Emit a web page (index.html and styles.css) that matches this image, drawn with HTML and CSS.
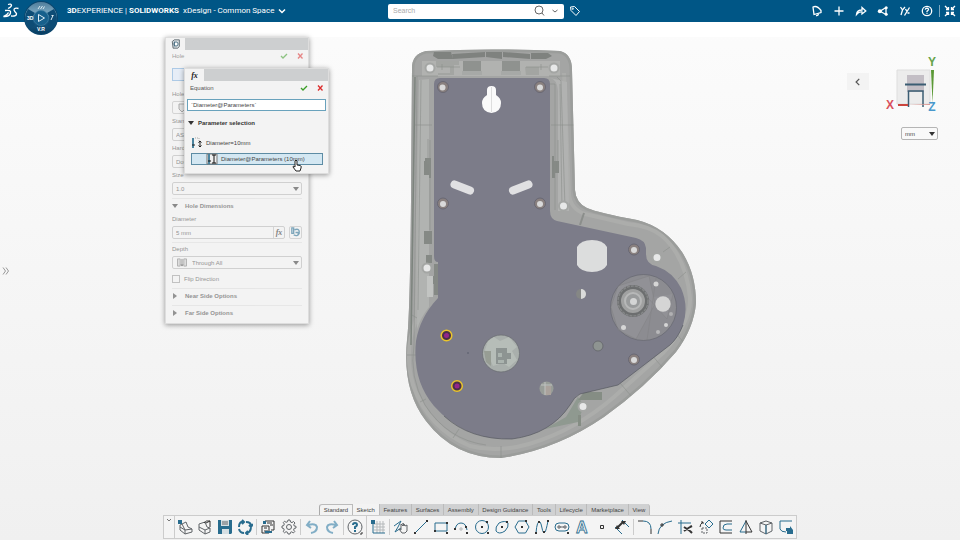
FILE: index.html
```html
<!DOCTYPE html>
<html lang="en">
<head>
  <meta charset="UTF-8" />
  <meta name="viewport" content="width=device-width, initial-scale=1.0" />
  <title>xDesign - Common Space</title>
  <link rel="stylesheet" href="styles.css">
</head>
<body>
  <header class="topbar">
    <svg class="ds-logo" viewBox="0 0 18 18" aria-label="3DS">
      <path d="M6 2.500Q9 1.500 9.500 3.200Q9.500 5 6 6.500M3 8.500Q9.500 7.500 8.500 11Q7.500 15 1.500 14.500Q5.500 13 6.500 10.500M16.500 6.500Q12 5.500 12 8Q12.500 9.500 14.500 11.500Q15 14.500 9 14" />
    </svg>
    <div class="brand"><b>3D</b>EXPERIENCE | <b>SOLIDWORKS</b></div>
    <button class="app-name">xDesign - Common Space
      <svg viewBox="0 0 8 8"><path d="M1 2.500L4 5.500L7 2.500" /></svg>
    </button>
    <div class="search">
      <input type="text" placeholder="Search" aria-label="Search">
      <svg class="glass" viewBox="0 0 12 12"><circle cx="6" cy="5" r="4" /><path d="M9 8L11 10.500" /></svg>
      <svg class="chev" viewBox="0 0 8 8"><path d="M1.500 3L4 5L6.500 3" /></svg>
    </div>
    <button class="tag" aria-label="Tags">
      <svg viewBox="0 0 12 12"><path d="M1.500 2L5.500 1.500L10.500 6.500L7 10.500L2 5.500Z" /><circle cx="3.800" cy="3.800" r=".6" /></svg>
    </button>
    <nav class="top-actions">
      <button aria-label="Notifications"><svg viewBox="0 0 12 12"><path d="M2 2Q6 0 10 5.500L10 7.500L3 9.500Z" /><path d="M5 10.500Q7 11 7.500 9" /></svg></button>
      <button aria-label="Add"><svg viewBox="0 0 12 12"><path d="M6 1.500V10.500M1.500 6H10.500" /></svg></button>
      <button aria-label="Share"><svg viewBox="0 0 12 12"><path d="M1.500 9.500Q2 5 7 5V2.500L10.800 6L7 9V7Q4 6.500 1.500 9.500Z" /></svg></button>
      <button aria-label="Collaborate"><svg viewBox="0 0 12 12"><path d="M9 2.500L3 6.200L9 9.500V3" /><g class="dots"><circle cx="9.200" cy="2.800" r="1.500" /><circle cx="2.800" cy="6.200" r="2" /><circle cx="9.200" cy="9.300" r="1.500" /></g></svg></button>
      <button aria-label="Tools"><svg viewBox="0 0 12 12"><path d="M1.500 2L3.500 5L6 2M3.500 5L2 10M6.500 4L8 6.500L10.500 2.500M8 6.500L5.500 10.500M8.500 8H10.500" /></svg></button>
      <button aria-label="Help"><svg viewBox="0 0 12 12"><circle cx="6" cy="6" r="4.700" /><path d="M4.300 4.700Q4.500 3.200 6 3.200Q7.600 3.300 7.500 4.700Q7.300 5.500 6 6.200V7.200M6 8.200V9" /></svg></button>
      <span class="bar"></span>
      <button aria-label="Exit full screen"><svg viewBox="0 0 12 12"><path d="M1 1L4.500 4.500M4.500 2V4.500H2M11 1L7.500 4.500M7.500 2V4.500H10M1 11L4.500 7.500M4.500 10V7.500H2M11 11L7.500 7.500M7.500 10V7.500H10" /></svg></button>
    </nav>
    <button class="compass" aria-label="Compass">
      <svg viewBox="0 0 36 36">
        <defs><linearGradient id="ball" x1="0" y1="0" x2="0" y2="1"><stop offset="0" stop-color="#507d9b" /><stop offset=".35" stop-color="#7ba9c2" /><stop offset=".5" stop-color="#1c628e" /><stop offset="1" stop-color="#073c60" /></linearGradient></defs>
        <circle cx="18" cy="18" r="17" fill="#0b466d" />
        <circle cx="18" cy="18" r="16" fill="url(#ball)" />
        <path d="M5 9L12 13Q7 18 12 25L6 29Q-1 18 5 9ZM31 9L24 13Q29 18 24 25L30 29Q37 18 31 9Z" fill="#0d4c75" />
        <circle cx="18" cy="18" r="7.500" fill="#17608c" stroke="#3d7da2" stroke-width=".7" />
        <path d="M15.500 14.500L21.500 18L15.500 21.500Z" fill="none" stroke="#dfedf5" />
        <path d="M15 9L17 6M17.500 9L19.500 6M20 9L21.500 6.500M28 20L30 15.500M28.500 15.500H30.500" stroke="#d8e8f0" fill="none" />
        <text x="4" y="20">3D</text><text x="14" y="31">V.R</text>
      </svg>
    </button>
  </header>

  <main class="workspace">
    <svg class="model" viewBox="400 40 300 425" aria-label="Housing part">
      <defs><clipPath id="shell"><path d="M412 68Q412 54 426 51Q492 48 560 51Q572 54 572 70L575 190Q576 203 587 208Q599 213 637 220Q665 227 682 252Q696 274 696 303Q694 328 676 352Q646 387 604 417Q556 450 501 458Q454 458 426 421Q402 390 407 340Q410 315 411 200Z" /></clipPath></defs>
      <g clip-path="url(#shell)">
        <rect x="400" y="40" width="300" height="425" fill="#a4a5a4" />
        <g fill="none" stroke="#9b9d9b" stroke-width="5">
          <path d="M412 68Q412 54 426 51Q492 48 560 51Q572 54 572 70L575 190Q576 203 587 208Q599 213 637 220Q665 227 682 252Q696 274 696 303Q694 328 676 352Q646 387 604 417Q556 450 501 458Q454 458 426 421Q402 390 407 340Q410 315 411 200Z" />
          <path d="M421 82L418 200L417 318Q403 350 413 385Q428 428 470 446Q497 453 529 444Q576 430 614 397L664 352Q691 322 690 298Q686 257 662 236Q650 226 628 224L585 214Q570 209 569 193L564 73" stroke="#acadab" stroke-width="4" />
        </g>
        <path d="M429 79V307Q421 317 417 329L419 80Z" fill="#b1b3b1" />
        <path d="M550 78Q557 79 558 91V211L569 211L567 82Z" fill="#b1b2b1" />
        <path d="M422 61H560V76H422Z" fill="#b1b2b0" />
        <g fill="#7f827f"><path d="M434 52H451L453 59H438L433 56ZM452 54L485 52V57L453 59ZM486 52H502V59L486 57ZM503 52L530 54V59L503 57ZM531 53H548L552 56L546 59H531Z" /></g>
        <g fill="#8f928f"><path d="M463 61H481V71H463ZM502 61H520V71H502Z" /><path d="M436 61H459V65H454V75H438V73H450V67H436ZM525 67H539V75H526Z" opacity=".4" /></g>
        <g fill="#a7a9a7"><path d="M462 71H482V75H462ZM501 71H521V75H501Z" /></g>
        <g fill="#858985"><path d="M425 158H431V178H429V175H424V161H425ZM552 156H554V161H559V173H555V178H552ZM424 231H432V244H424ZM426 255H432V263H426Z" /><path d="M434 264H439V295H434ZM427 276H438V284H427Z" /></g>
        <path d="M427 276H433V297H427Z" fill="#c2c4c2" />
        <g fill="none" stroke="#8b8e8b" stroke-width=".6">
          <path d="M412 76H438M549 76H570M417 76L414 345M421 80L418 310M414 125H432M551 125H574M549 84H555V210M560 84L562 210M557 77L561 81L565 208M412 315L417 318M407 355H416M420 402L426 399M453 438L459 429M501 446V458M580 385L592 400M620 383L632 397M651 354L662 367M675 332L684 343M678 279L686 272M663 252L670 247M414 345Q409 377 425 405Q448 440 486 445" />
          <path d="M428 139V164M430 140V230M558 140V170M437 67H460M526 67H548M442 64V70M541 64V70" />
          <path d="M580 225L584 213" stroke-width="2" />
          <path d="M415 77L411 345" stroke="#7d847e" stroke-width="1.500" />
        </g>
        <path d="M578 397L566 417L545 429L578 422L584 405Z" fill="#8f9990" />
        <path d="M584 392H602V400H578ZM578 415H581V426H578Z" fill="#858d84" />
      </g>
      <path class="plate" d="M434 84Q434 78 440 78H544Q550 78 550 84V211Q550 219 557 221L636 238Q645 240 646 248V254Q646 264 656 266Q673 272 681 288Q689 306 683 325Q678 338 670 345L618 385L580 394Q574 397 570 405Q551 434 512 439Q465 441 434 406Q412 380 416 341Q420 317 438 298V262Q434 262 434 256Z" />
      <path d="M683 325Q678 338 670 345L618 385L580 394Q574 397 570 405Q551 434 512 439Q470 440 444 416" fill="none" stroke="#4e5158" stroke-width=".6" />
      <path d="M487 96V90Q487 86 491.500 86Q496 86 496 90V95Q501 98 501 103Q501 112 491.500 113Q482 112 482 103Q482 98 487 95Z" fill="#fafafa" />
      <path d="M491.500 87V112" stroke="#ddd" />
      <g stroke="#e0e0e2" stroke-width="8" stroke-linecap="round"><path d="M454.500 184.500L470 190.500M528.500 184.500L513 190.500" /></g>
      <g fill="#89807f" stroke="#62626e" stroke-width=".8"><circle cx="443" cy="87" r="5.500" /><circle cx="540" cy="87" r="5.500" /><circle cx="443" cy="203.500" r="5.500" /><circle cx="540" cy="203.500" r="5.500" /><circle cx="634" cy="249.500" r="5.500" /><circle cx="634" cy="359.500" r="5.500" /></g>
      <g fill="#d9d9da"><circle cx="442.500" cy="87.500" r="3" /><circle cx="540" cy="87.500" r="3" /><circle cx="443" cy="204" r="3" /><circle cx="540" cy="204" r="3" /><circle cx="634" cy="250" r="3" /><circle cx="634" cy="360" r="3" /></g>
      <g fill="#e7e8e8" stroke="#a4a6a4" stroke-width="2"><circle cx="430" cy="68" r="4.500" /><circle cx="554" cy="68" r="4.500" /><circle cx="563.500" cy="206" r="4.500" /><circle cx="657" cy="257.500" r="4.500" /><circle cx="583" cy="406.500" r="4.500" /><circle cx="427" cy="268" r="4.500" /></g>
      <path d="M577 247Q581 240 592 240Q603 240 607 247V265Q603 272 592 272Q581 272 577 265Z" fill="#dcdddd" />
      <circle cx="643.500" cy="307.500" r="33" fill="#8c8c91" stroke="#656770" stroke-width=".7" />
      <path d="M618 286L611 307L618 330L636 339L655 304L649 276ZM656 278L647 340M648 298L667 319L673 294" fill="#9a9a9e" opacity=".4" stroke="#777" stroke-width=".6" />
      <circle cx="633" cy="301" r="14" fill="#a0a1a1" stroke="#6c6e6f" stroke-width="4" />
      <circle cx="633" cy="301" r="15" fill="none" stroke="#858788" stroke-width="1.500" stroke-dasharray="3 1" />
      <circle cx="633" cy="301" r="8" fill="#999b9c" stroke="#b7b8b8" stroke-width="2" />
      <circle cx="633.500" cy="301.500" r="3.500" fill="#d4d5d5" />
      <g fill="#d5d5d5"><circle cx="663" cy="304" r="7.700" /><circle cx="623.500" cy="327.500" r="2.500" /><circle cx="656" cy="284" r="2.500" /><circle cx="666" cy="325" r="2" /><circle cx="658" cy="332" r="2" opacity=".6" /><circle cx="671" cy="314" r="2" opacity=".5" /></g>
      <circle cx="581" cy="294" r="5" fill="#858785" /><path d="M581 289A5 5 0 0 1 581 299Z" fill="#dadbda" />
      <circle cx="598" cy="346" r="5" fill="#8e9491" stroke="#696b70" />
      <circle cx="501" cy="353.500" r="18.500" fill="#a9afac" stroke="#686c70" stroke-width=".7" />
      <path d="M485 350L488 341L494 337L500 341L509 337L517 347L512 351L517 360L509 367L503 363L493 366L490 359Z" fill="#c0c6bf" opacity=".6" />
      <path d="M496 348H507V353H511V359H507V364H496Z" fill="#8d9492" />
      <path d="M484 351H491V366L486 362Z" fill="#979d94" />
      <path d="M498 353H502V357H498ZM498 360H504V363H498Z" fill="#abb4af" />
      <circle cx="546.500" cy="388.500" r="7" fill="#989d98" /><path d="M545 386H551V395H545Z" fill="#aaa29c" /><path d="M541 385H552M545 382V395" stroke="#bfc2c0" />
      <g fill="#4a3047" stroke="#e9c52c" stroke-width="1.500"><circle cx="446.500" cy="335.500" r="5.300" /><circle cx="457" cy="386" r="5.300" /></g>
      <g fill="#93268a"><circle cx="446.500" cy="335.500" r="2.500" /><circle cx="457" cy="386" r="2.500" /></g>
      <circle cx="468" cy="353" r=".8" fill="#555966" />
    </svg>

    <button class="drawer" aria-label="Open tree"><svg viewBox="0 0 8 10"><path d="M1 1.500L3.500 5L1 8.500M4 1.500L6.500 5L4 8.500" /></svg></button>

    <aside class="view-tools">
      <button class="collapse" aria-label="Show tools"><svg viewBox="0 0 8 8"><path d="M5 1.500L2.500 4L5 6.500" /></svg></button>
      <div class="orient">
        <svg class="triad" viewBox="0 0 54 64">
          <path d="M13 20H46V54H13Z" fill="#ececec" stroke="#dedede" />
          <path d="M23 25H40V42H23Z" fill="#c3bec5" />
          <path d="M21 34.500H42" stroke="#3b5d73" stroke-width="2" />
          <path d="M24.500 57V41H39V57" fill="none" stroke="#3b5d73" stroke-width="1.500" />
          <path d="M14 54H24V56H14Z" fill="#cb453d" /><path d="M24 55L46 54V55Z" fill="#dc9692" />
          <path d="M47 20H50L48.500 53Z" fill="#5b9936" />
          <text x="6" y="59" fill="#d9505d">X</text><text x="48" y="16" fill="#66a34a">Y</text><text x="48" y="61" fill="#4898cc">Z</text>
        </svg>
        <div class="select-box units"><select aria-label="Units"><option>mm</option></select></div>
      </div>
    </aside>

    <section class="panel hole-panel">
      <div class="panel-tabs"><span class="panel-tab"><svg viewBox="0 0 12 12"><path d="M1.500 3L4 1H10V9L8 11H2.500Z" fill="#dce1e4" stroke="#4d5a61" /><circle cx="6" cy="6" r="2.500" fill="#fff" stroke="#396277" /><path d="M4 3V9" stroke="#396277" /></svg></span></div>
      <div class="panel-fade">
        <div class="panel-title"><span>Hole</span>
          <button class="ok" aria-label="Accept hole"><svg viewBox="0 0 8 8"><path d="M1 4L3 6L7 2" /></svg></button>
          <button class="cancel" aria-label="Cancel hole"><svg viewBox="0 0 8 8"><path d="M2 1.500L6.500 6.500M6.500 1.500L2 6.500" /></svg></button>
        </div>
        <div class="selection"></div>
        <label for="hole">Hole Type</label>
        <button class="hole-type" id="hole" aria-label="Hole Type"><svg viewBox="0 0 10 10"><path d="M2 1H8V6L5 9L2 6Z" fill="#ddd" stroke="#777" /></svg></button>
        <label for="standard">Standard</label>
        <div class="select-box"><select id="standard"><option>ASME</option></select></div>
        <label for="hardware">Hardware</label>
        <div class="select-box"><select id="hardware"><option>Dowel Hole</option></select></div>
        <label for="size">Size</label>
        <div class="select-box"><select id="size"><option>1.0</option></select></div>
        <h3 class="group">Hole Dimensions</h3>
        <label for="diameter">Diameter</label>
        <div class="dim-row">
          <div class="dim-input"><input id="diameter" type="text" value="5 mm"><button>fx</button></div>
          <button class="link" aria-label="Link dimension"><svg viewBox="0 0 12 12"><path d="M2 1H4V7H2ZM5 3Q11 1 10 7Q8 11 4 8.500M6 6H9V8" fill="none" stroke="#1f698f" stroke-width="1.500" /></svg></button>
        </div>
        <hr>
        <label for="depth">Depth</label>
        <div class="select-box with-icon">
          <svg viewBox="0 0 12 10"><path d="M1 1H4V9H1ZM8 1H11V9H8Z" fill="#ccc" stroke="#777" /><path d="M6 1V8M5 7L6 9L7 7" stroke="#333" fill="none" /></svg>
          <select id="depth"><option>Through All</option></select>
        </div>
        <label class="flip"><input type="checkbox"> Flip Direction</label>
        <h3 class="group closed">Near Side Options</h3>
        <h3 class="group closed">Far Side Options</h3>
      </div>
    </section>

    <section class="panel equation-panel">
      <div class="panel-tabs"><span class="panel-tab fx">fx</span></div>
      <div class="panel-title"><span>Equation</span>
        <button class="ok" aria-label="Accept equation"><svg viewBox="0 0 8 8"><path d="M1 4L3 6L7 2" /></svg></button>
        <button class="cancel" aria-label="Cancel equation"><svg viewBox="0 0 8 8"><path d="M2 1.500L6.500 6.500M6.500 1.500L2 6.500" /></svg></button>
      </div>
      <input class="formula" type="text" aria-label="Formula" value="`Diameter@Parameters`">
      <h3 class="group">Parameter selection</h3>
      <div class="param">
        <svg viewBox="0 0 12 12"><path d="M2 1V11" stroke="#4b849f" stroke-width="2" /><path d="M4 1H8V6" stroke="#aaa" stroke-dasharray="1 1" fill="none" /><path d="M1 8H4M9 4V10M7.500 5.500L9 4L10.500 5.500M7.500 8.500L9 10L10.500 8.500" stroke="#222" fill="none" /></svg>
        <span>Diameter=10mm</span>
      </div>
      <button class="param selected">
        <svg viewBox="0 0 12 12"><path d="M1 1H11V11H1Z" fill="#eee" stroke="#777" /><path d="M3 1V11" stroke="#4b849f" stroke-width="2" /><path d="M8 2V10M6 2H10M6 10H10M2 8H5" stroke="#111" fill="none" /></svg>
        <span>Diameter@Parameters (10mm)</span>
      </button>
      <svg class="pointer" viewBox="0 0 10 13"><path d="M3 8V2Q4 0 5 2V6L8 6.500Q10 7 9 9L8 12H4L1 8Q1 6 3 8Z" fill="#fff" stroke="#222" /></svg>
    </section>
  </main>

  <footer class="action-bar">
    <nav class="tabs">
      <button class="pinned">Standard</button>
      <button class="active">Sketch</button>
      <button>Features</button>
      <button>Surfaces</button>
      <button>Assembly</button>
      <button>Design Guidance</button>
      <button>Tools</button>
      <button>Lifecycle</button>
      <button>Marketplace</button>
      <button>View</button>
    </nav>
    <div class="tools">
      <button class="grip" aria-label="Collapse bar"><svg viewBox="0 0 8 8"><path d="M2 3L4 5L6 3" /></svg></button>
      <button aria-label="New part"><svg viewBox="0 0 16 16"><path class="g" d="M5 5L9 3L11 8L15 10V13L8 15L3 11V6Z" /><path class="g" d="M3 8L8 11L15 10M8 11V15M5 5L8 11" /><path class="bf" d="M1 1H5V5H1Z" /></svg></button>
      <button aria-label="Open"><svg viewBox="0 0 16 16"><path class="g" d="M2 5L8 3L10 8L13 9V13L8 15L2 11ZM2 8L8 11V15M8 11L13 9" /><path class="k" d="M7 4Q9 1 13 2V8M9 4L13 2" /></svg></button>
      <button aria-label="Save"><svg viewBox="0 0 16 16"><path class="bf" d="M1 1H15V14L14 15H1Z" /><path d="M4 1H12V7H4ZM5 10H12V15H5Z" fill="#d6dfe3" /><path class="g" d="M5 3H11M5 5H11" /></svg></button>
      <button aria-label="Update"><svg viewBox="0 0 16 16"><path class="b wide" d="M7 3Q2 2 2 8M2 10Q3 14 7 14M9 3Q14 3 14 7M14 9Q13 14 9 14M5 1L7 3L5 5M11 12L9 14L11 16M12 6L14 8L16 5" /></svg></button>
      <span class="sep"></span>
      <button aria-label="Design manager"><svg viewBox="0 0 16 16"><path class="k" d="M5 2H14V11H11M2 7H9V14H2ZM4 9H7M7 4H12M10 6H13M4 12H8" /><path class="bf" d="M3 2H6V5H3ZM5 12H12V14H5Z" /></svg></button>
      <button aria-label="Settings"><svg viewBox="0 0 16 16"><path class="g" d="M7 1H9L9.500 3L11 3.600L12.500 2.500L14 4L12.800 5.500L13.200 7L15 7.300V9L13.200 9.400L12.600 11L13.800 12.500L12.300 14L10.800 12.800L9.500 13.300L9 15H7L6.500 13.300L5 12.700L3.500 13.800L2.200 12.500L3.200 11L2.700 9.500L1 9V7L2.700 6.600L3.300 5L2.300 3.500L3.600 2.200L5 3.300L6.500 2.800Z" /><circle class="g" cx="8" cy="8" r="2.500" /></svg></button>
      <span class="sep"></span>
      <button aria-label="Undo"><svg viewBox="0 0 16 16"><path class="light wide" d="M7 14Q13 13 13 8Q12 4 4 6M6 2L3 6L7 9" /></svg></button>
      <button aria-label="Redo"><svg viewBox="0 0 16 16"><path class="light wide" d="M9 14Q3 13 3 8Q4 4 12 6M10 2L13 6L9 9" /></svg></button>
      <span class="sep"></span>
      <button aria-label="Help"><svg viewBox="0 0 16 16"><circle class="g" cx="8" cy="8" r="7" /><path class="b wide" d="M6 6Q6 4 8 4Q10 4 10 6Q10 7 8 8V10M8 11V13" /><path class="k" d="M13 15H15V13" /></svg></button>
      <span class="sep tall"></span>
      <button aria-label="Sketch"><svg viewBox="0 0 16 16"><path class="g faint" d="M4 5H15M4 8H15M4 11H15M7 2V14M10 2V14M13 2V14" /><path class="b" d="M3 3V14H15" /><path class="bf" d="M1 1H5V5H1Z" /></svg></button>
      <span class="sep"></span>
      <button aria-label="Sketch path"><svg viewBox="0 0 16 16"><path class="b" d="M1 7L8 2L5 8L2 13L8 9" /><path class="g" d="M8 11V5L10 7V4L11 7V5L12 7L14 6V12L12 14H9L6 10Z" /></svg></button>
      <button aria-label="Line"><svg viewBox="0 0 16 16"><path class="b" d="M2 14L14 2" /><path class="kf" d="M1 13H3V15H1ZM13 1H15V3H13Z" /></svg></button>
      <button aria-label="Rectangle"><svg viewBox="0 0 16 16"><path class="b" d="M2 4H14V12H2Z" /><path class="kf" d="M1 11H3V13H1ZM13 3H15V5H13ZM13 13H15V15H13Z" /></svg></button>
      <button aria-label="Arc"><svg viewBox="0 0 16 16"><path class="b" d="M2 11Q3 4 8 4Q13 4 14 11" /><path class="kf" d="M1 9H3V11H1ZM12 7H14V9H12ZM13 13H15V15H13Z" /><path class="g faint" d="M7 9H9V11H7Z" /></svg></button>
      <button aria-label="Circle"><svg viewBox="0 0 16 16"><circle class="b" cx="8" cy="8" r="6.500" /><path class="kf" d="M7 7H9V9H7ZM12 2H14V4H12ZM13 13H15V15H13Z" /></svg></button>
      <button aria-label="Ellipse"><svg viewBox="0 0 16 16"><path class="b" d="M2 12Q1 8 5 4Q11 1 14 4Q15 8 11 12Q5 16 2 12Z" /><path class="kf" d="M7 7H9V9H7ZM12 2H14V4H12Z" /></svg></button>
      <button aria-label="Polygon"><svg viewBox="0 0 16 16"><path class="b" d="M4.500 2H11.500L15 8L11.500 14H4.500L1 8Z" /><path class="kf" d="M7 7H9V9H7ZM11 1H13V3H11Z" /></svg></button>
      <button aria-label="Spline"><svg viewBox="0 0 16 16"><path class="b" d="M2 14Q3 1 6 3Q7 4 8 9Q9 15 11 13Q12 12 14 2" /><path class="kf" d="M1 13H3V15H1ZM4 2H6V4H4ZM13 1H15V3H13ZM9 12H11V14H9Z" /></svg></button>
      <button aria-label="Slot"><svg viewBox="0 0 16 16"><path class="b" d="M5 4H11Q15 4 15 8Q15 12 11 12H5Q1 12 1 8Q1 4 5 4Z" /><path class="g" d="M4 7H6V9H4ZM10 7H12V9H10ZM6 8H10" /><path class="kf" d="M13 13H15V15H13Z" /></svg></button>
      <button aria-label="Text"><svg viewBox="0 0 16 16"><text class="letter" x="2" y="14">A</text></svg></button>
      <button aria-label="Point"><svg viewBox="0 0 16 16"><path class="k" d="M6.500 6.500H9.500V9.500H6.500Z" /></svg></button>
      <button aria-label="Dimension"><svg viewBox="0 0 16 16"><path class="b" d="M8 1L15 8M1 8L8 15" /><path class="k wide" d="M3 9L9 3" /><path class="kf" d="M1 10L3 6L6 10ZM12 2L7 2L10 6Z" /></svg></button>
      <span class="sep"></span>
      <button aria-label="Fillet"><svg viewBox="0 0 16 16"><path class="k" d="M1 2H6M14 10V15" /><path class="b" d="M6 2Q14 2 14 10" /></svg></button>
      <button aria-label="Extend"><svg viewBox="0 0 16 16"><path class="b" d="M1 15Q2 4 15 2" /><path class="k" d="M4 5H6V7H4Z" /></svg></button>
      <button aria-label="Trim"><svg viewBox="0 0 16 16"><path class="b" d="M1 4H14M4 1V15" /><path class="k wide" d="M7 8L13 12M7 12L13 8M13 12L15 14M13 8L15 7" /></svg></button>
      <button aria-label="Move"><svg viewBox="0 0 16 16"><path class="b" d="M11 1L15 5L11 9L7 5Z" /><path class="k" d="M2 8Q2 5 5 3M3 3H5V5" /><path class="g dash" d="M4 9H9V14H4Z" /></svg></button>
      <button aria-label="Offset"><svg viewBox="0 0 16 16"><path class="k" d="M14 2H2V14H14" /><path class="b" d="M14 5H9Q5 5 5 9Q5 11 8 11H14" /></svg></button>
      <button aria-label="Mirror"><svg viewBox="0 0 16 16"><path class="b" d="M8 2L2 13H8" /><path class="k" d="M8 1V15M8 2L14 13H8" /></svg></button>
      <button aria-label="Convert"><svg viewBox="0 0 16 16"><path class="g" d="M2 4L8 2L14 4V12L8 15L2 12ZM2 4L8 6L14 4M8 6V15" /><path class="b" d="M8 6V15" /></svg></button>
      <button aria-label="Exit sketch"><svg viewBox="0 0 16 16"><path class="b" d="M14 2H2V10Q3 13 8 13" /><path class="bf" d="M8 9H12V7L15 11V15H9V12H8Z" /></svg></button>
    </div>
  </footer>
</body>
</html>
```
FILE: styles.css
```css
* {
  box-sizing: border-box;
}
body {
  margin: 0;
  height: 100vh;
  display: flex;
  flex-direction: column;
  overflow: hidden;
  background: linear-gradient(#fcfcfc, #f0f0f0);
  font-family: "Liberation Sans", Arial, sans-serif;
  font-size: 6px;
  line-height: 8px;
  color: #444;
}
button, input, select {
  font: inherit;
  color: inherit;
  margin: 0;
  padding: 0;
  border: 0;
  background: none;
  min-width: 0;
}
svg {
  display: block;
  fill: none;
}

/* top bar */
.topbar {
  position: relative;
  height: 22px;
  flex: none;
  display: flex;
  align-items: center;
  background: #005686;
  color: #fff;
  font-family: Roboto, "Open Sans", sans-serif;
  font-size: 8px;
  line-height: 12px;
}
.topbar svg {
  stroke: #fff;
  width: 12px;
  height: 12px;
}
.topbar .ds-logo {
  width: 18px;
  height: 18px;
  margin: 0 47px 0 2px;
  stroke-width: 1.3;
}
.brand {
  white-space: nowrap;
}
.app-name {
  display: flex;
  align-items: center;
  gap: 4px;
  margin-left: 4px;
  white-space: nowrap;
}
.topbar .app-name svg {
  width: 8px;
  height: 8px;
  stroke-width: 1.5;
}
.search {
  position: absolute;
  left: 388px;
  width: 176px;
  height: 15px;
  display: flex;
  align-items: center;
  gap: 6px;
  padding: 0 5px;
  border-radius: 2px;
  background: #fff;
}
.search input {
  flex: 1;
  outline: 0;
  color: #555;
  font-family: "Liberation Sans", Arial, sans-serif;
  font-size: 7px;
}
.search input::placeholder {
  color: #aaa;
}
.topbar .search svg {
  stroke: #666;
}
.topbar .search .chev {
  width: 8px;
  height: 8px;
}
.tag {
  position: absolute;
  left: 569px;
}
.top-actions {
  display: flex;
  align-items: center;
  gap: 10px;
  margin-left: auto;
  padding-right: 4px;
}
.top-actions svg {
  stroke-width: 1.3;
}
.top-actions .dots {
  fill: #fff;
  stroke: none;
}
.top-actions .bar {
  width: 1px;
  height: 12px;
  margin: 0 -6px 0 -4px;
  background: #7da8c1;
}
.compass {
  position: absolute;
  left: 23px;
  top: 0;
  z-index: 3;
}
.topbar .compass svg {
  width: 36px;
  height: 36px;
  stroke: none;
}
.compass text {
  fill: #fff;
  font: bold 5px "Liberation Sans", sans-serif;
}

/* canvas with the model and floating panels */
.workspace {
  position: relative;
  flex: 1;
  border-top: 15px solid #fff;
}
.model {
  position: absolute;
  left: 400px;
  top: 3px;
  width: 300px;
  height: 425px;
}
.plate {
  fill: #7c7c89;
}
.drawer {
  position: absolute;
  left: 2px;
  top: 229px;
}
.drawer svg {
  width: 8px;
  height: 10px;
  stroke: #999;
}
.view-tools {
  position: absolute;
  top: 13px;
  right: 22px;
  display: flex;
  gap: 15px;
  align-items: flex-start;
}
.collapse {
  width: 22px;
  height: 17px;
  margin-top: 23px;
  display: grid;
  place-items: center;
  background: #f3f3f3;
}
.collapse svg {
  width: 10px;
  height: 10px;
  stroke: #555;
}
.orient {
  display: flex;
  flex-direction: column;
  align-items: flex-end;
  gap: 13px;
}
.triad {
  width: 54px;
  height: 64px;
}
.triad text {
  font: bold 12px "Liberation Sans", sans-serif;
  text-anchor: middle;
}

.panel {
  position: absolute;
  width: 145px;
  background: #f3f3f3;
  border: 1px solid #ddd;
  box-shadow: 0 1px 5px rgba(0, 0, 0, .4);
}
.hole-panel {
  left: 165px;
  top: 0;
  width: 144px;
  height: 287px;
}
.equation-panel {
  left: 184px;
  top: 31px;
  height: 106px;
}
.panel-tabs {
  height: 12px;
  background: #cdcfd0;
}
.panel-tab {
  width: 19px;
  height: 12px;
  display: grid;
  place-items: center;
  background: #f3f3f3;
}
.panel-tab svg {
  width: 10px;
  height: 10px;
}
.fx, .dim-input button {
  color: #222;
  font: italic bold 8px "Liberation Serif", serif;
}
.panel-fade {
  padding: 0 6px;
}
.panel-fade > * {
  opacity: .55;
}
.panel-title {
  display: flex;
  align-items: center;
  gap: 8px;
  height: 13px;
  color: #555;
}
.panel-title span {
  flex: 1;
  font-size: 6px;
}
.panel-title svg {
  width: 8px;
  height: 8px;
}
.hole-panel .panel-title {
  height: 12px;
  margin-right: -2px;
}
.ok svg {
  stroke: #3b9d27;
  stroke-width: 1.3;
}
.cancel svg {
  stroke: #dc2c2c;
  stroke-width: 1.3;
}
.selection {
  height: 13px;
  margin: 6px 0 9px;
  border: 1px solid #75a9dc;
  background: #dce9fb;
}
.panel-fade > label {
  display: block;
  height: 8px;
  margin-bottom: 3px;
}
.hole-type {
  display: block;
  width: 20px;
  height: 13px;
  margin-bottom: 3px;
  padding: 1px 4px;
  border: 1px solid #bbb;
  border-radius: 2px;
}
.hole-type svg {
  width: 10px;
  height: 10px;
}
.select-box {
  position: relative;
  height: 13px;
  margin-bottom: 3px;
}
.select-box select {
  width: 100%;
  height: 100%;
  appearance: none;
  padding-left: 3px;
  border: 1px solid #b5b5b5;
  border-radius: 2px;
}
.select-box::after {
  content: "";
  position: absolute;
  right: 3px;
  top: 5px;
  border: 3px solid transparent;
  border-top: 4px solid #333;
  border-bottom: 0;
  pointer-events: none;
}
.select-box.units {
  width: 37px;
  margin: 0;
}
.with-icon svg {
  position: absolute;
  left: 4px;
  top: 2px;
  width: 12px;
  height: 9px;
}
.with-icon select {
  padding-left: 19px;
}
.group {
  position: relative;
  margin: 0;
  padding-left: 13px;
  font-size: 6px;
  line-height: 8px;
}
.group::before {
  content: "";
  position: absolute;
  left: 0;
  top: 2px;
  border: 3px solid transparent;
  border-top: 4px solid #333;
  border-bottom: 0;
}
.panel-fade .group {
  padding-top: 3px;
  padding-bottom: 5px;
  border-top: 1px solid #ddd;
}
.panel-fade .group::before {
  top: 5px;
}
.panel-fade .group.closed::before {
  left: 1px;
  top: 4px;
  border: 3px solid transparent;
  border-left: 4px solid #444;
  border-right: 0;
}
.dim-row {
  display: flex;
  justify-content: space-between;
  height: 13px;
  margin-bottom: 3px;
}
.dim-input {
  display: flex;
  width: 113px;
  border: 1px solid #b5b5b5;
  border-radius: 2px;
}
.dim-input input {
  flex: 1;
  padding-left: 3px;
}
.dim-input button {
  width: 11px;
  border-left: 1px solid #bbb;
}
.link {
  width: 13px;
  border: 1px solid #bbb;
  border-radius: 2px;
}
.panel-fade hr {
  margin: 0 0 2px;
  border: 0;
  border-top: 1px solid #ddd;
}
.panel-fade .flip {
  display: flex;
  align-items: center;
  gap: 4px;
  margin: 6px 0 5px;
}
.flip input {
  appearance: none;
  width: 8px;
  height: 8px;
  border: 1px solid #999;
}
.panel-fade .closed {
  height: 17px;
}

.equation-panel .panel-title {
  margin: 0 4px 0 5px;
}
.formula {
  display: block;
  width: calc(100% - 4px);
  height: 12px;
  margin: 5px 2px 8px;
  padding-left: 3px;
  border: 1px solid #69a2bc;
  background: #fff;
  text-decoration: underline #d22;
}
.equation-panel .group {
  margin: 0 3px 9px;
  padding-left: 10px;
  color: #333;
}
.param {
  display: flex;
  align-items: center;
  gap: 3px;
  height: 13px;
  margin: 0 5px 4px 6px;
}
.param svg {
  width: 12px;
  height: 12px;
}
.param.selected {
  width: 132px;
  height: 12px;
  padding-left: 14px;
  border: 1px solid #5d8ca4;
  background: #d3e7f2;
}
.pointer {
  position: absolute;
  left: 107px;
  top: 90px;
  width: 10px;
  height: 13px;
}

/* bottom action bar */
.action-bar {
  flex: none;
  align-self: center;
  display: flex;
  flex-direction: column;
  width: 634px;
  height: 36px;
}
.tabs {
  display: flex;
  width: 331px;
  margin-left: 156px;
}
.tabs button {
  flex: auto;
  height: 11px;
  padding: 0 3px;
  border-right: 1px solid #bbb;
  background: #d0d1d2;
  white-space: nowrap;
}
.tabs .pinned, .tabs .active {
  background: #f3f3f3;
}
.tabs .pinned {
  border-left: 1px solid #aaa;
  border-top: 1px solid #bbb;
  border-top-left-radius: 3px;
}
.tabs button:last-child {
  border-top-right-radius: 3px;
}
.tools {
  display: flex;
  align-items: center;
  justify-content: space-between;
  height: 24px;
  border: 1px solid #ccc;
  background: #f4f4f4;
}
.tools button {
  width: 20px;
  height: 22px;
  flex: none;
  display: grid;
  place-items: center;
}
.tools .grip {
  width: 11px;
  border-right: 1px solid #ccc;
  place-items: start center;
}
.tools svg {
  width: 16px;
  height: 16px;
}
.tools .grip svg {
  width: 8px;
  height: 8px;
  stroke: #777;
}
.sep {
  width: 1px;
  height: 16px;
  margin: 0 1px;
  background: #ccc;
}
.sep.tall {
  height: 22px;
}
.b {
  stroke: #286c8e;
}
.k {
  stroke: #333;
}
.g {
  stroke: #606468;
}
.light {
  stroke: #82aec6;
}
.faint {
  stroke: #b5b9bb;
}
.wide {
  stroke-width: 2;
}
.dash {
  stroke-dasharray: 2 1;
}
.bf {
  fill: #286c8e;
}
.kf {
  fill: #333;
}
.letter {
  font: bold 16px "Liberation Sans", sans-serif;
  fill: #f4f4f4;
  stroke: #286c8e;
  stroke-width: .8;
}
```
